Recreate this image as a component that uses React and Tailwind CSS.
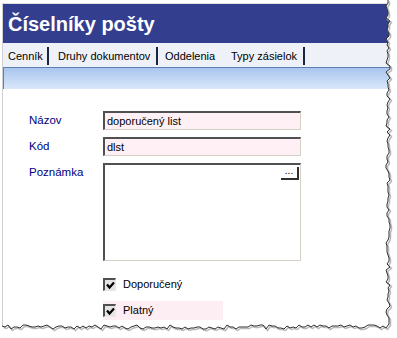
import React from "react";

function jagged() {
  let seed = 7;
  const rnd = () => {
    seed = (seed * 9301 + 49297) % 233280;
    return seed / 233280;
  };
  const pts = [];
  for (let y = 0; y <= 326; y += 3) {
    pts.push([386 + Math.round(rnd() * 4), y]);
  }
  for (let x = 386; x >= 0; x -= 3) {
    pts.push([x, 325 + Math.round(rnd() * 4)]);
  }
  return pts;
}

function Torn() {
  const pts = jagged();
  const line = pts.map((p) => p.join(",")).join(" ");
  const shadow = pts.map((p) => `${p[0] + 1.5},${p[1] + 1.5}`).join(" ");
  const fill = `0,338 397,338 397,0 ${line}`;
  return (
    <svg className="absolute left-0 top-0" width="397" height="338" viewBox="0 0 397 338">
      <polygon points={fill} fill="#ffffff" />
      <polyline points={shadow} fill="none" stroke="#b8b8b8" strokeWidth="1.5" />
      <polyline points={line} fill="none" stroke="#303030" strokeWidth="1" />
    </svg>
  );
}

function Input({ value }) {
  return (
    <div className="w-[198px] h-[19px] bg-[#fff0f5] border-t-2 border-l-2 border-t-[#505050] border-l-[#505050] border-b border-r border-b-[#d4d0c8] border-r-[#d4d0c8] flex items-center pl-[2px] text-[11px] leading-none text-black whitespace-nowrap">
      {value}
    </div>
  );
}

function Check({ label, pink }) {
  return (
    <div className={`flex items-center h-[19px] w-[120px] ${pink ? "bg-[#fdeef3]" : ""}`}>
      <div className="w-[13px] h-[13px] border-t-2 border-l-2 border-t-[#505050] border-l-[#505050] border-b border-r border-b-[#e8e8e8] border-r-[#e8e8e8] bg-[#e4e4e4] flex items-center justify-center">
        <svg width="9" height="9" viewBox="0 0 9 9">
          <path d="M1 3.5 L3.5 6.5 L8 1.5" fill="none" stroke="#000" strokeWidth="2.2" />
        </svg>
      </div>
      <span className="ml-[7px] text-[11px] leading-none text-black whitespace-nowrap">{label}</span>
    </div>
  );
}

export default function App() {
  const tabs = [
    { t: "Cenník", w: "w-[46px]", pl: "pl-[5px]", sep: true },
    { t: "Druhy dokumentov", w: "w-[109px]", pl: "pl-[9px]", sep: true },
    { t: "Oddelenia", w: "w-[60px]", pl: "pl-[7px]", sep: false },
    { t: "Typy zásielok", w: "w-[87px]", pl: "pl-[13px]", sep: true },
  ];
  return (
    <div className="relative w-[397px] h-[338px] bg-white overflow-hidden" style={{ fontFamily: '"Liberation Sans", Arial, sans-serif' }}>
      <div className="pt-[3px] pl-[2px]">
        <div className="w-[390px] h-[330px] border-l border-[#d0d0d0] flex flex-col">
          <div className="h-[40px] bg-[#333e8e] flex items-center pl-[5px] border-t border-[#e0e0e0]">
            <span className="text-white font-bold text-[20px] leading-none whitespace-nowrap">Číselníky pošty</span>
          </div>
          <div className="h-[24px] bg-[#eef2f8] flex items-start pt-[4px]">
            {tabs.map((tab) => (
              <div key={tab.t} className={`${tab.w} ${tab.pl} shrink-0 h-[18px] flex items-center text-[11px] leading-none text-black whitespace-nowrap ${tab.sep ? "border-r-2 border-[#1c2540]" : ""}`}>
                {tab.t}
              </div>
            ))}
          </div>
          <div className="h-[22px] bg-gradient-to-b from-[#a9c5ee] to-[#d9e8fb] border-t border-l border-[#5f7fb4]" />
          <div className="flex flex-col pt-[22px]">
            <div className="flex items-center h-[19px]">
              <span className="w-[74px] pl-[26px] box-content text-[11.5px] leading-none text-[#000080]">Názov</span>
              <Input value="doporučený list" />
            </div>
            <div className="flex items-center h-[19px] mt-[7px]">
              <span className="w-[74px] pl-[26px] box-content text-[11.5px] leading-none text-[#000080]">Kód</span>
              <Input value="dlst" />
            </div>
            <div className="flex items-start mt-[7px]">
              <span className="w-[74px] pl-[26px] box-content text-[11.5px] leading-none text-[#000080] pt-[4px]">Poznámka</span>
              <div className="w-[198px] h-[98px] bg-white border-t-2 border-l-2 border-t-[#505050] border-l-[#505050] border-b border-r border-b-[#d4d0c8] border-r-[#d4d0c8] flex justify-end pt-[2px] pr-[1px]">
                <div className="w-[18px] h-[13px] bg-white border-b-2 border-r-2 border-[#303030] flex items-center justify-center text-[10px] leading-none text-black pb-[3px]">
                  ...
                </div>
              </div>
            </div>
            <div className="pl-[100px] mt-[14px] flex flex-col gap-[7px]">
              <Check label="Doporučený" />
              <Check label="Platný" pink />
            </div>
          </div>
        </div>
      </div>
      <Torn />
    </div>
  );
}
